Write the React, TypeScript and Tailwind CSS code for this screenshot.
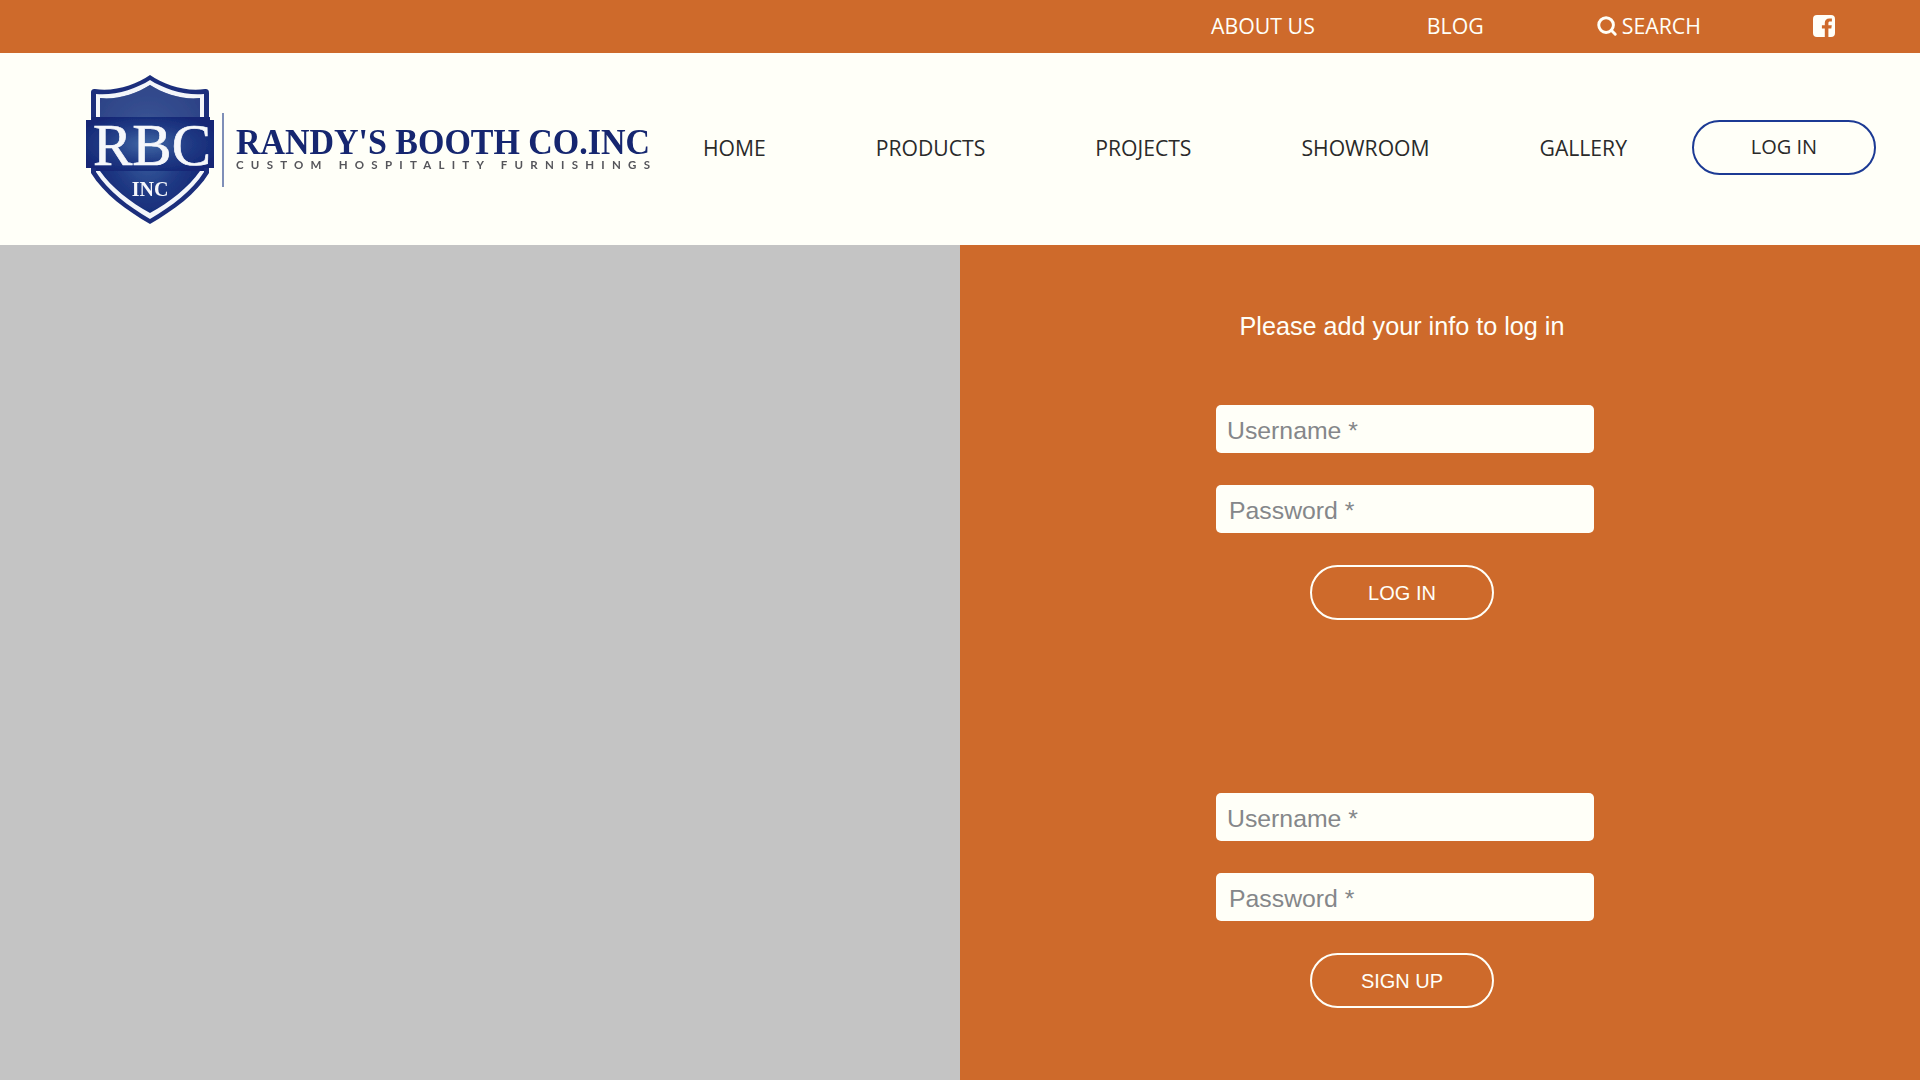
import { Search } from 'lucide-react'

const SANS = 'font-["Liberation_Sans",Arial,sans-serif]'

function Logo() {
  return (
    <svg width="575" height="160" viewBox="0 0 575 160" className="block shrink-0" aria-label="Randy's Booth Co. Inc logo">
      <defs>
        <radialGradient id="shieldFill" cx="48%" cy="50%" r="60%">
          <stop offset="0%" stopColor="#3f68a5" />
          <stop offset="55%" stopColor="#213b85" />
          <stop offset="100%" stopColor="#122574" />
        </radialGradient>
        <filter id="soft">
          <feGaussianBlur stdDeviation="0.6" />
        </filter>
      </defs>
      <g filter="url(#soft)">
        {/* shield: outer rim, white line, inner fill */}
        <path d="M68 6 C82 16 104 23 123 20 C126 20 127 21 127 24 L127 104 C114 125 92 141 68 155 C44 141 22 125 9 104 L9 24 C9 21 10 20 13 20 C32 23 54 16 68 6 Z" fill="#1c2f7c" />
        <path d="M68 11 C82 20 104 27 122 25 L122 103 C110 122 90 137 68 150 C46 137 26 122 14 103 L14 25 C32 27 54 20 68 11 Z" fill="#f4f6fa" />
        <path d="M68 16 C82 25 102 31 118 29 L118 102 C106 119 88 133 68 144 C48 133 30 119 18 102 L18 29 C34 31 54 25 68 16 Z" fill="url(#shieldFill)" />
        <path d="M18 29 C34 31 54 25 68 16 C82 25 102 31 118 29 L118 50 C86 62 50 62 18 52 Z" fill="#465c97" opacity="0.55" />
        {/* ribbon behind the letters */}
        <path d="M4 51 L10 51 L10 48 L128 48 L128 51 L132 51 L132 99 L122 99 L122 102 L14 102 L14 99 L4 99 Z" fill="url(#shieldFill)" />
        <text x="11" y="96" textLength="118" lengthAdjust="spacingAndGlyphs" fill="#f6f8fb" stroke="#f6f8fb" strokeWidth="0.7" fontFamily="Liberation Serif, serif" fontSize="60">RBC</text>
        <text x="68" y="127" textAnchor="middle" fill="#f6f8fb" fontFamily="Liberation Serif, serif" fontSize="20" fontWeight="700">INC</text>
        <rect x="140" y="44" width="2" height="74" fill="#7f8fb8" />
        <text x="154" y="85" textLength="414" lengthAdjust="spacingAndGlyphs" fill="#14276f" fontFamily="Liberation Serif, serif" fontSize="35" fontWeight="700">RANDY'S BOOTH CO.INC</text>
        <text x="154" y="100" textLength="414" lengthAdjust="spacing" fill="#55555a" fontFamily="Lato, sans-serif" fontSize="11.5" fontWeight="700">CUSTOM HOSPITALITY FURNISHINGS</text>
      </g>
    </svg>
  )
}

function FacebookIcon() {
  return (
    <svg width="22" height="22" viewBox="0 0 22 22" aria-hidden="true">
      <path
        fillRule="evenodd"
        fill="#fffff8"
        d="M4 0 H18 A4 4 0 0 1 22 4 V18 A4 4 0 0 1 18 22 H15.4 V13.6 H18.3 L18.8 10.2 H15.4 V8.2 C15.4 7.2 15.8 6.6 17 6.6 H18.9 V3.6 C18.4 3.5 17.4 3.4 16.2 3.4 C13.6 3.4 11.8 5 11.8 7.8 V10.2 H8.9 V13.6 H11.8 V22 H4 A4 4 0 0 1 0 18 V4 A4 4 0 0 1 4 0 Z"
      />
    </svg>
  )
}

function Field({ placeholder, indent }: { placeholder: string; indent: string }) {
  return (
    <input
      type="text"
      placeholder={placeholder}
      className={`block w-[378px] h-12 ${indent} pt-[3px] bg-[#fffff8] rounded-[5px] text-[24.8px] text-[#333] placeholder:text-[#85878a] outline-none ${SANS}`}
    />
  )
}

function AuthForm({ label }: { label: string }) {
  return (
    <div className="flex flex-col items-center">
      <Field placeholder="Username *" indent="pl-[11px]" />
      <div className="h-8" />
      <Field placeholder="Password *" indent="pl-[13px]" />
      <button className="w-[184px] h-[55px] mt-8 -translate-x-[3px] rounded-full border-2 border-[#fffff8] text-[#fffff8] text-[20px]">
        {label}
      </button>
    </div>
  )
}

export default function App() {
  return (
    <div className="w-[1920px] h-[1080px] overflow-hidden flex flex-col bg-[#fffff8] font-['Open_Sans',sans-serif]">
      <div className="h-[53px] shrink-0 bg-[#ce6a2b] flex items-center justify-end pr-[85px] pb-[2px] gap-[112px] text-[21.3px] text-[#fffff8]">
        <a>ABOUT US</a>
        <a>BLOG</a>
        <a className="flex items-center gap-[4px]">
          <Search className="w-[22px] h-[22px]" strokeWidth={3.2} />
          SEARCH
        </a>
        <FacebookIcon />
      </div>

      <header className="h-[192px] shrink-0 flex items-center justify-between pl-[82px] pr-[44px]">
        <Logo />
        <nav className="flex items-center text-[21.15px] text-[#2a2a2a] -translate-y-[2px]">
          <div className="flex items-center gap-[110px] mr-[65px] pt-[2px]">
            <a>HOME</a>
            <a>PRODUCTS</a>
            <a>PROJECTS</a>
            <a>SHOWROOM</a>
            <a>GALLERY</a>
          </div>
          <button className="w-[184px] h-[55px] rounded-full border-2 border-[#1c3a94] text-[20px]">LOG IN</button>
        </nav>
      </header>

      <main className="flex-1 flex">
        <div className="w-1/2 bg-[#c4c4c4]" />
        <div className={`w-1/2 bg-[#ce6a2b] flex flex-col items-center pr-[76px] ${SANS}`}>
          <p className="mt-[67px] text-[25.2px] leading-[28px] text-[#fffff8]">Please add your info to log in</p>
          <div className="mt-[65px] pl-[6px]">
            <AuthForm label="LOG IN" />
          </div>
          <div className="mt-[173px] pl-[6px]">
            <AuthForm label="SIGN UP" />
          </div>
        </div>
      </main>
    </div>
  )
}
